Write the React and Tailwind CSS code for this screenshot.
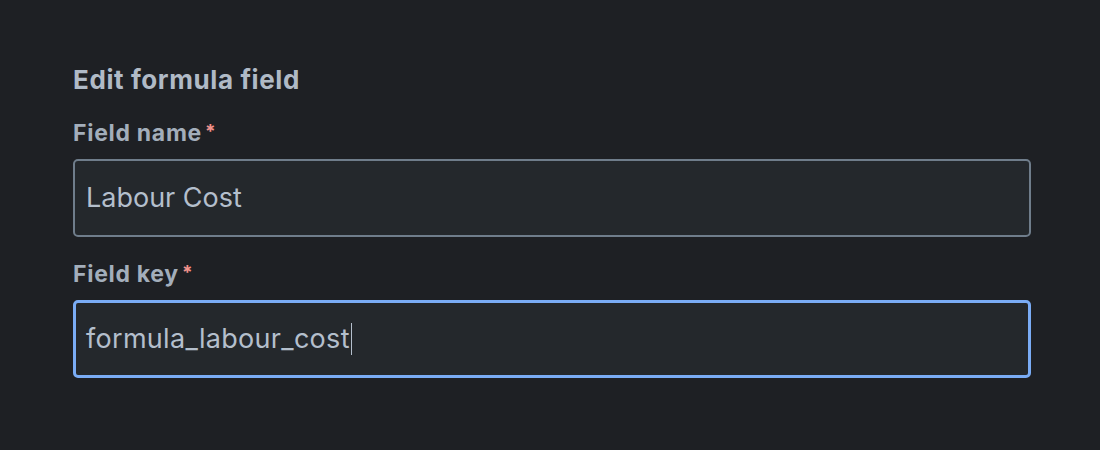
export default function App() {
  return (
    <div
      className="min-h-screen w-full bg-[#1e2024] text-[#b4bfcc]"
      style={{ fontFamily: "Inter, 'Noto Sans', sans-serif" }}
    >
      <div className="pl-[73px] pr-[69px] pt-[64px]">
        <h2 className="text-[26px] leading-[32px] font-bold tracking-[0.6px] text-[#b0bac6]">Edit formula field</h2>

        <div className="mt-[23px]">
          <label className="flex items-start text-[23px] leading-[28px] font-bold tracking-[0.7px] text-[#a3aebb]">
            Field name
            <span className="ml-[3px] mt-[4px] text-[#f2928c] text-[19px] leading-[18px]">*</span>
          </label>
          <div className="mt-[12px] h-[78px] rounded-[5px] border-2 border-[#6f7d8b] bg-[#24282c] flex items-center px-[11px]">
            <span className="text-[27px] text-[#b4bfcc]">Labour Cost</span>
          </div>
        </div>

        <div className="mt-[23px]">
          <label className="flex items-start text-[23px] leading-[28px] font-bold tracking-[0.7px] text-[#a3aebb]">
            Field key
            <span className="ml-[3px] mt-[4px] text-[#f2928c] text-[19px] leading-[18px]">*</span>
          </label>
          <div className="mt-[12px] h-[78px] rounded-[5px] border-[3px] border-[#7aacf5] bg-[#24282c] flex items-center px-[10px]">
            <span className="text-[27px] tracking-[0.3px] text-[#b4bfcc]">formula_labour_cost</span>
            <span className="ml-[1px] w-[1.5px] h-[32px] bg-[#b4bfcc]" />
          </div>
        </div>
      </div>
    </div>
  );
}
